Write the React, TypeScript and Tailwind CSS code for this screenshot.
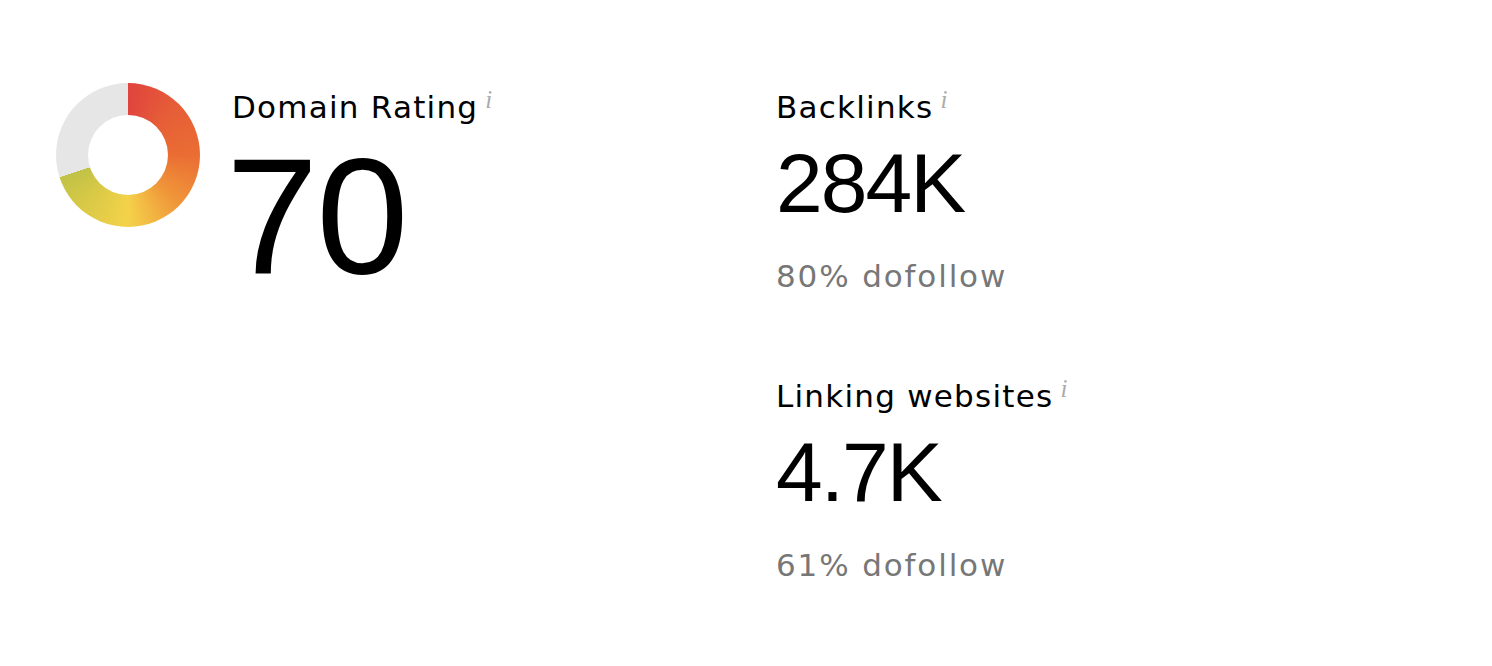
import React from 'react';

type Metric = {
  label: string;
  value: string;
  sub: string;
};

const metrics: Metric[] = [
  { label: 'Backlinks', value: '284K', sub: '80% dofollow' },
  { label: 'Linking websites', value: '4.7K', sub: '61% dofollow' },
];

const InfoMark = () => (
  <span className="ml-[7px] mt-[-2px] font-['Liberation_Serif',serif] text-[25px] leading-[25px] italic text-[#ababab]">
    i
  </span>
);

const Label = ({ children }: { children: React.ReactNode }) => (
  <div className="flex items-start">
    <span className="text-[31px] leading-[36px] tracking-[0.04em] text-black">
      {children}
    </span>
    <InfoMark />
  </div>
);

const RatingDonut = () => (
  <div className="flex h-[144px] w-[144px] shrink-0 items-center justify-center rounded-full [background-image:conic-gradient(#e0443e_0deg,#e65e37_45deg,#ea6d33_90deg,#f0973a_135deg,#f4d24a_180deg,#d6c846_225deg,#c0c247_252deg,#e6e6e6_252deg,#e6e6e6_360deg)]">
    <div className="h-[80px] w-[80px] rounded-full bg-white" />
  </div>
);

export default function App() {
  return (
    <div className="min-h-[666px] bg-white font-['DejaVu_Sans',sans-serif] antialiased">
      <div className="flex pl-[56px] pt-[83px]">
        {/* domain rating */}
        <div className="flex w-[720px] shrink-0">
          <RatingDonut />
          <div className="ml-[32px] mt-[6px]">
            <Label>Domain Rating</Label>
            <div className="ml-[-6px] mt-[8px] font-['Liberation_Sans',sans-serif] text-[166px] leading-[166px] tracking-[-2px] text-black">
              70
            </div>
          </div>
        </div>

        {/* backlinks + linking websites */}
        <div className="mt-[6px] flex flex-col gap-[84px]">
          {metrics.map((m) => (
            <div key={m.label}>
              <Label>{m.label}</Label>
              <div className="mt-[16px] font-['Liberation_Sans',sans-serif] text-[84px] leading-[84px] tracking-[-2px] text-black">
                {m.value}
              </div>
              <div className="mt-[33px] text-[31px] leading-[36px] tracking-[0.06em] text-[#777777]">
                {m.sub}
              </div>
            </div>
          ))}
        </div>
      </div>
    </div>
  );
}
